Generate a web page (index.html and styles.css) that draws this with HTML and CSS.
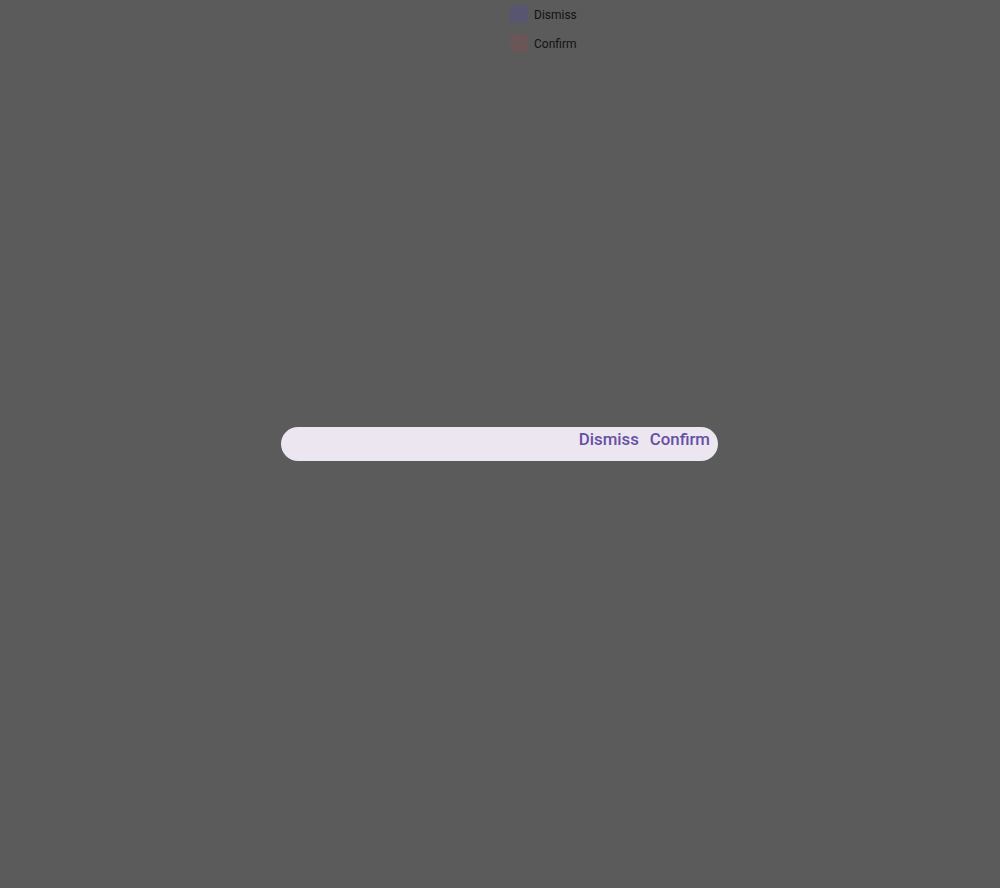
FILE: index.html
```html
<!DOCTYPE html>
<html>
<head>
<meta charset="utf-8">
<link rel="stylesheet" href="styles.css">
</head>
<body>
<div class="legend">
  <div class="legend-item"><span class="swatch swatch-dismiss"></span><span class="label">Dismiss</span></div>
  <div class="legend-item"><span class="swatch swatch-confirm"></span><span class="label">Confirm</span></div>
</div>
<div class="stage">
  <div class="dialog">
    <div class="actions">
      <button class="btn">Dismiss</button>
      <button class="btn">Confirm</button>
    </div>
  </div>
</div>
</body>
</html>
```
FILE: styles.css
```css
html, body {
  margin: 0;
  padding: 0;
  width: 1000px;
  height: 888px;
  background: #5b5b5b;
  font-family: Roboto, "Noto Sans", sans-serif;
  overflow: hidden;
}
body {
  display: flex;
  flex-direction: column;
}
.legend {
  display: flex;
  flex-direction: column;
  gap: 11px;
  padding: 5px 0 0 510px;
}
.legend-item {
  display: flex;
  align-items: center;
  gap: 6px;
  height: 18px;
}
.swatch {
  width: 18px;
  height: 18px;
  border-radius: 4px;
  display: block;
}
.swatch-dismiss { background: #57556f; }
.swatch-confirm { background: #6a5557; }
.label {
  font-size: 12px;
  line-height: 14px;
  padding-top: 2px;
  color: #121212;
}
.stage {
  flex: 1;
  display: flex;
  justify-content: flex-start;
  padding: 375px 0 0 281px;
}
.dialog {
  width: 437px;
  height: 34px;
  background: #ece6f0;
  border-radius: 17px;
  box-sizing: border-box;
}
.actions {
  display: flex;
  justify-content: flex-end;
  gap: 11px;
  padding: 2px 8px 0 0;
}
.btn {
  border: none;
  background: none;
  padding: 0;
  font-family: Roboto, sans-serif;
  font-weight: 500;
  font-size: 16.8px;
  line-height: 20px;
  color: #6750a4;
}
```
